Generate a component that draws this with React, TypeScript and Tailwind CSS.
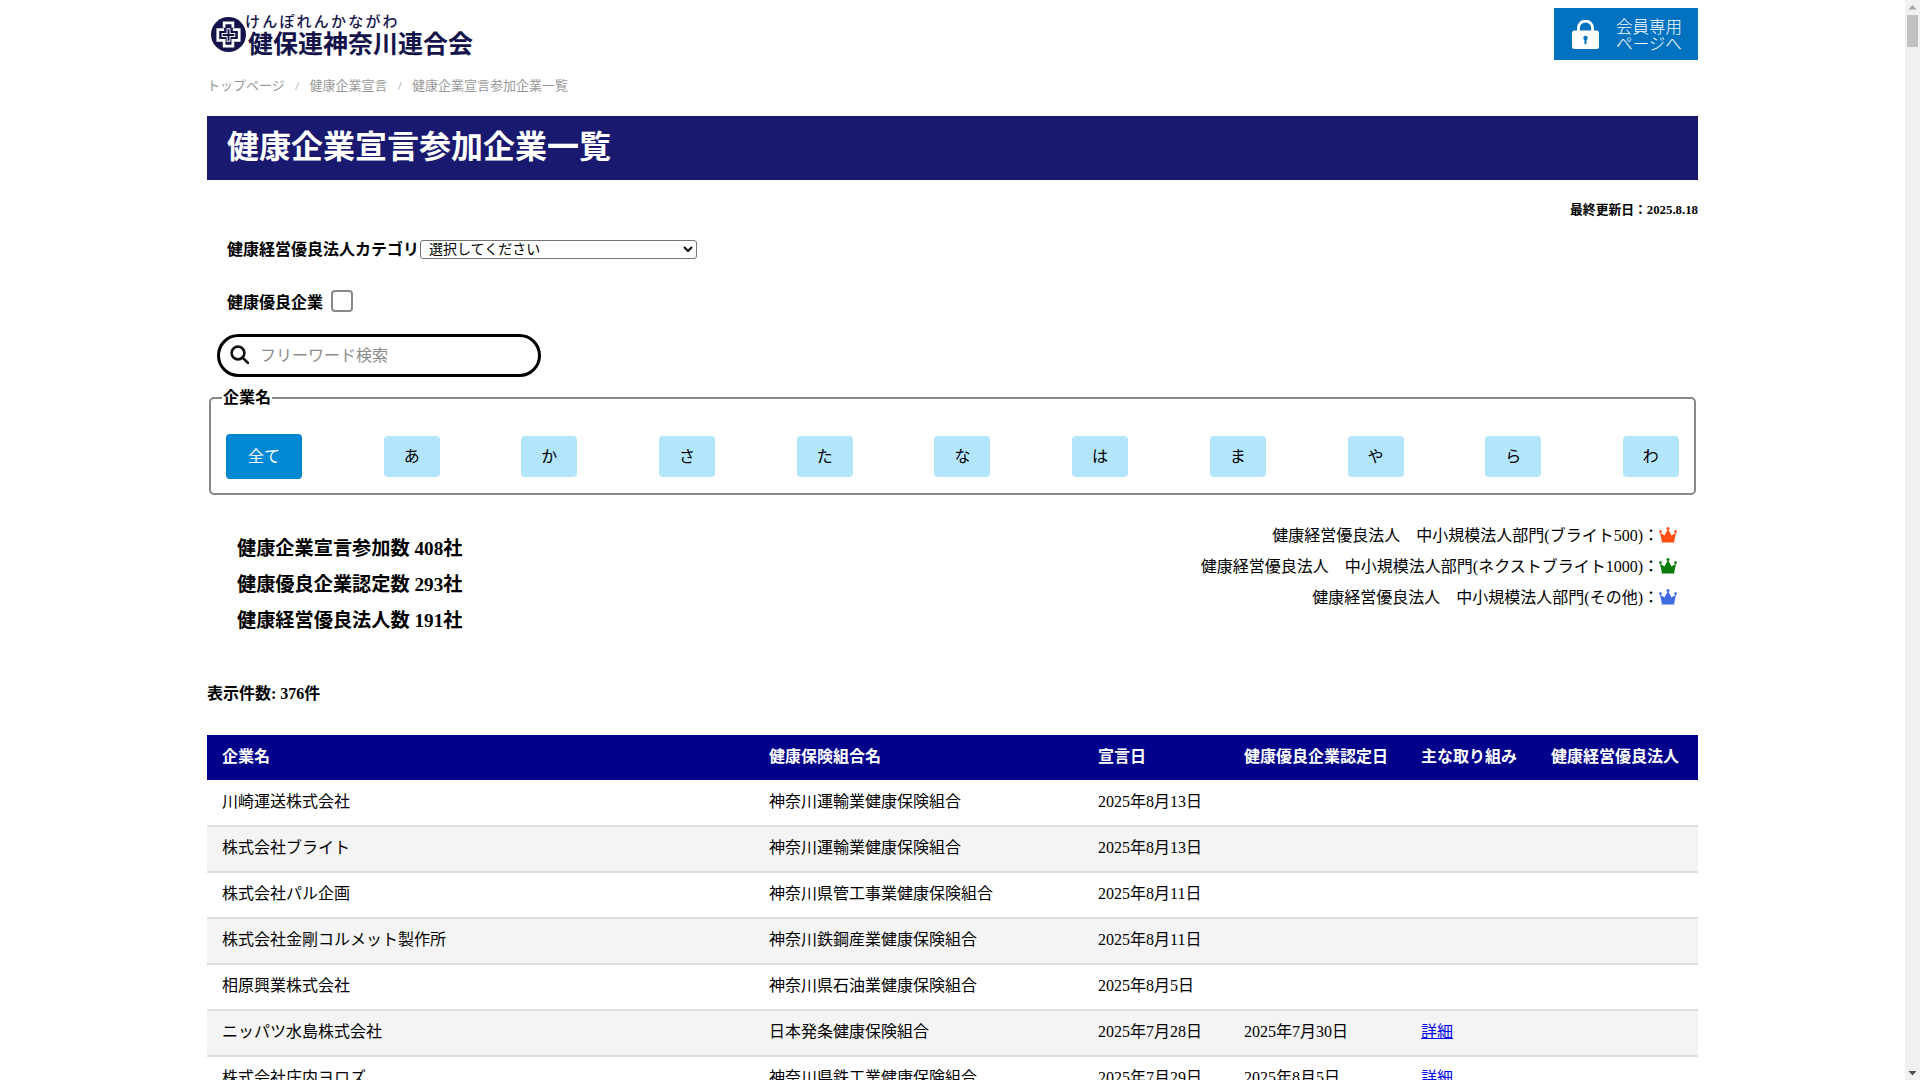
const kana = ['あ', 'か', 'さ', 'た', 'な', 'は', 'ま', 'や', 'ら', 'わ'];

const rows = [
  { name: '川崎運送株式会社', kumiai: '神奈川運輸業健康保険組合', date: '2025年8月13日' },
  { name: '株式会社ブライト', kumiai: '神奈川運輸業健康保険組合', date: '2025年8月13日' },
  { name: '株式会社パル企画', kumiai: '神奈川県管工事業健康保険組合', date: '2025年8月11日' },
  { name: '株式会社金剛コルメット製作所', kumiai: '神奈川鉄鋼産業健康保険組合', date: '2025年8月11日' },
  { name: '相原興業株式会社', kumiai: '神奈川県石油業健康保険組合', date: '2025年8月5日' },
  { name: 'ニッパツ水島株式会社', kumiai: '日本発条健康保険組合', date: '2025年7月28日', nintei: '2025年7月30日', detail: true },
  { name: '株式会社庄内ヨロズ', kumiai: '神奈川県鉄工業健康保険組合', date: '2025年7月29日', nintei: '2025年8月5日', detail: true },
];

const legend = [
  { label: '健康経営優良法人　中小規模法人部門(ブライト500)：', color: '#ff4f0f' },
  { label: '健康経営優良法人　中小規模法人部門(ネクストブライト1000)：', color: '#0a7a0a' },
  { label: '健康経営優良法人　中小規模法人部門(その他)：', color: '#4169e1' },
];

function Crown({ color }: { color: string }) {
  return (
    <svg width="18" height="16" viewBox="0 0 18 16" fill={color}>
      <path d="M3 15.5 1 5.5 5.4 8.6 9 2l3.6 6.6L17 5.5l-2 10z" />
      <circle cx="1.4" cy="4.6" r="1.4" />
      <circle cx="9" cy="1.6" r="1.5" />
      <circle cx="16.6" cy="4.6" r="1.4" />
    </svg>
  );
}

function LogoMark() {
  return (
    <svg width="35" height="35" viewBox="0 0 36 36">
      <circle cx="18" cy="18" r="18" fill="#14144b" />
      <path
        d="M13.5 11V6h9v5M13.5 13H7v11h6.5v6h9v-6H29V13h-6.5"
        fill="none"
        stroke="#fff"
        strokeWidth="2.8"
      />
      <path d="M16 11.5h4v5h5v4h-5v5h-4v-5h-5v-4h5z" fill="#fff" />
      <path d="M17 12.5h2v5h5v2h-5v5h-2v-5h-5v-2h5z" fill="#14144b" />
    </svg>
  );
}

function LockIcon() {
  return (
    <svg width="27" height="29" viewBox="0 0 27 29" fill="none">
      <path d="M6.5 12V8a7 7 0 0 1 14 0v4" stroke="#fff" strokeWidth="2.8" />
      <rect x="0" y="10.5" width="27" height="18.5" rx="2.5" fill="#fff" />
      <circle cx="13.5" cy="18" r="2.2" fill="#0072bf" />
      <rect x="12.5" y="18.5" width="2" height="5.5" fill="#0072bf" />
    </svg>
  );
}

function SearchIcon() {
  return (
    <svg width="19" height="19" viewBox="0 0 19 19" fill="none" stroke="#111" strokeWidth="2.6" className="-mt-0.5 ml-px shrink-0">
      <circle cx="8" cy="8" r="6.4" />
      <path d="M12.6 12.6 18 18" strokeLinecap="round" />
    </svg>
  );
}

// ページ右端のスクロールバー
function ScrollBar() {
  return (
    <div className="fixed right-0 top-0 flex h-screen w-[15px] flex-col items-center bg-[#f1f1f1]">
      <svg width="15" height="15" viewBox="0 0 15 15" className="shrink-0">
        <path d="M7.5 5 11.5 9.5h-8z" fill="#a3a3a3" />
      </svg>
      <div className="h-8 w-[11px] shrink-0 bg-[#c1c1c1]" />
      <svg width="15" height="15" viewBox="0 0 15 15" className="mt-auto shrink-0">
        <path d="M7.5 10.5 3.5 6h8z" fill="#505050" />
      </svg>
    </div>
  );
}

export default function App() {
  return (
    <div className="bg-white pr-[15px] font-['Liberation_Serif','Noto_Sans_CJK_JP',serif] text-base text-black">
      <ScrollBar />
      <div className="mx-auto w-[1491px]">
        {/* ヘッダー */}
        <header className="flex h-[68px] items-start justify-between pt-2">
          <div className="relative h-[60px] w-[280px]">
            <div className="absolute left-[4px] top-[9px]">
              <LogoMark />
            </div>
            <span className="absolute left-[38px] top-[6px] font-['Noto_Sans_CJK_JP',sans-serif] text-[15px] leading-[14px] font-medium tracking-[2.2px] text-[#14144b]">
              けんぽれんかながわ
            </span>
            <span className="absolute left-[41px] top-[21px] font-['Noto_Sans_CJK_JP',sans-serif] text-[25px] leading-[26px] font-bold text-[#14144b]">
              健保連神奈川連合会
            </span>
          </div>
          <a className="flex h-[52px] w-36 items-center bg-[#0072bf] pl-[18px] font-['Noto_Sans_CJK_JP',sans-serif] text-white">
            <LockIcon />
            <span className="ml-[17px] mt-px flex flex-col items-center text-[16.5px] leading-[17px] font-light">
              <span>会員専用</span>
              <span>ページへ</span>
            </span>
          </a>
        </header>

        {/* パンくず */}
        <nav className="flex h-[48px] items-start pt-2 text-[13px] leading-5 text-[#999]">
          <span>トップページ</span>
          <span className="mx-[10.5px]">/</span>
          <span>健康企業宣言</span>
          <span className="mx-[10.5px]">/</span>
          <span>健康企業宣言参加企業一覧</span>
        </nav>

        <h1 className="flex h-16 items-center bg-[#191970] pb-0.5 pl-5 text-[32px] font-bold text-white">
          健康企業宣言参加企業一覧
        </h1>

        <p className="mt-5 text-right text-[12.8px] leading-5 font-bold">最終更新日：2025.8.18</p>

        {/* 絞り込み */}
        <div className="mt-[18px] flex items-center pl-5 font-bold">
          <label className="leading-6">健康経営優良法人カテゴリ</label>
          <select className="ml-px -mt-0.5 h-[19px] w-[277px] rounded-[3px] border border-[#767676] bg-white pl-1 text-[14px] leading-none font-normal">
            <option>選択してください</option>
          </select>
        </div>

        <div className="mt-[27px] flex h-6 items-center pl-5 font-bold">
          <span className="mt-1 leading-6">健康優良企業</span>
          <span className="ml-2 h-[22px] w-[22px] rounded-[4px] border-2 border-[#888] bg-white" />
        </div>

        <div className="ml-[10px] mt-[21px] flex h-[43px] w-[324px] items-center rounded-full border-[3px] border-black px-[9px]">
          <SearchIcon />
          <input
            type="text"
            placeholder="フリーワード検索"
            className="ml-[11px] w-full bg-transparent text-base outline-none placeholder:text-[#8a8a8a]"
          />
        </div>

        {/* 企業名 */}
        <fieldset className="mx-[2px] mt-[11px] h-[107px] rounded-[5px] border-2 border-[#888] px-[15px] pt-[26px]">
          <legend className="-ml-1 px-px text-base leading-5 font-bold">企業名</legend>
          <div className="flex items-center justify-between">
            <button className="h-[45px] w-[76px] rounded-[4px] bg-[#0088d2] text-white">全て</button>
            {kana.map((k) => (
              <button key={k} className="h-[41px] w-[56px] rounded-[4px] bg-[#b3e5fc]">
                {k}
              </button>
            ))}
          </div>
        </fieldset>

        {/* 集計と凡例 */}
        <div className="mt-6 flex items-start justify-between">
          <div className="pl-[30px] pt-3 text-[19.2px] leading-9 font-bold">
            <p>健康企業宣言参加数 408社</p>
            <p>健康優良企業認定数 293社</p>
            <p>健康経営優良法人数 191社</p>
          </div>
          <div className="mr-[21px] flex flex-col items-end text-base">
            {legend.map((l) => (
              <div key={l.color} className="flex h-[31px] items-center">
                <span className="mt-0.5 leading-[27px]">{l.label}</span>
                <Crown color={l.color} />
              </div>
            ))}
          </div>
        </div>

        <p className="mt-[43px] leading-6 font-bold">表示件数: 376件</p>

        <table className="mt-[29px] w-full table-fixed border-collapse text-left">
          <colgroup>
            <col className="w-[547px]" />
            <col className="w-[329px]" />
            <col className="w-[146px]" />
            <col className="w-[177px]" />
            <col className="w-[130px]" />
            <col className="w-[162px]" />
          </colgroup>
          <thead>
            <tr className="h-[45px] bg-[#00008b] text-white">
              <th className="px-[15px] pb-0.5">企業名</th>
              <th className="px-[15px] pb-0.5">健康保険組合名</th>
              <th className="px-[15px] pb-0.5">宣言日</th>
              <th className="px-[15px] pb-0.5">健康優良企業認定日</th>
              <th className="px-[15px] pb-0.5">主な取り組み</th>
              <th className="whitespace-nowrap px-[15px] pb-0.5">健康経営優良法人</th>
            </tr>
          </thead>
          <tbody>
            {rows.map((r) => (
              <tr key={r.name} className="h-[46px] border-b-2 border-[#ddd] even:bg-[#f4f4f4]">
                <td className="px-[15px] pb-0.5">{r.name}</td>
                <td className="px-[15px] pb-0.5">{r.kumiai}</td>
                <td className="px-[15px] pb-0.5">{r.date}</td>
                <td className="px-[15px] pb-0.5">{r.nintei}</td>
                <td className="px-[15px] pb-0.5">
                  {r.detail && <a className="text-[#0000ee] underline">詳細</a>}
                </td>
                <td className="px-[15px] pb-0.5" />
              </tr>
            ))}
          </tbody>
        </table>
      </div>
    </div>
  );
}
